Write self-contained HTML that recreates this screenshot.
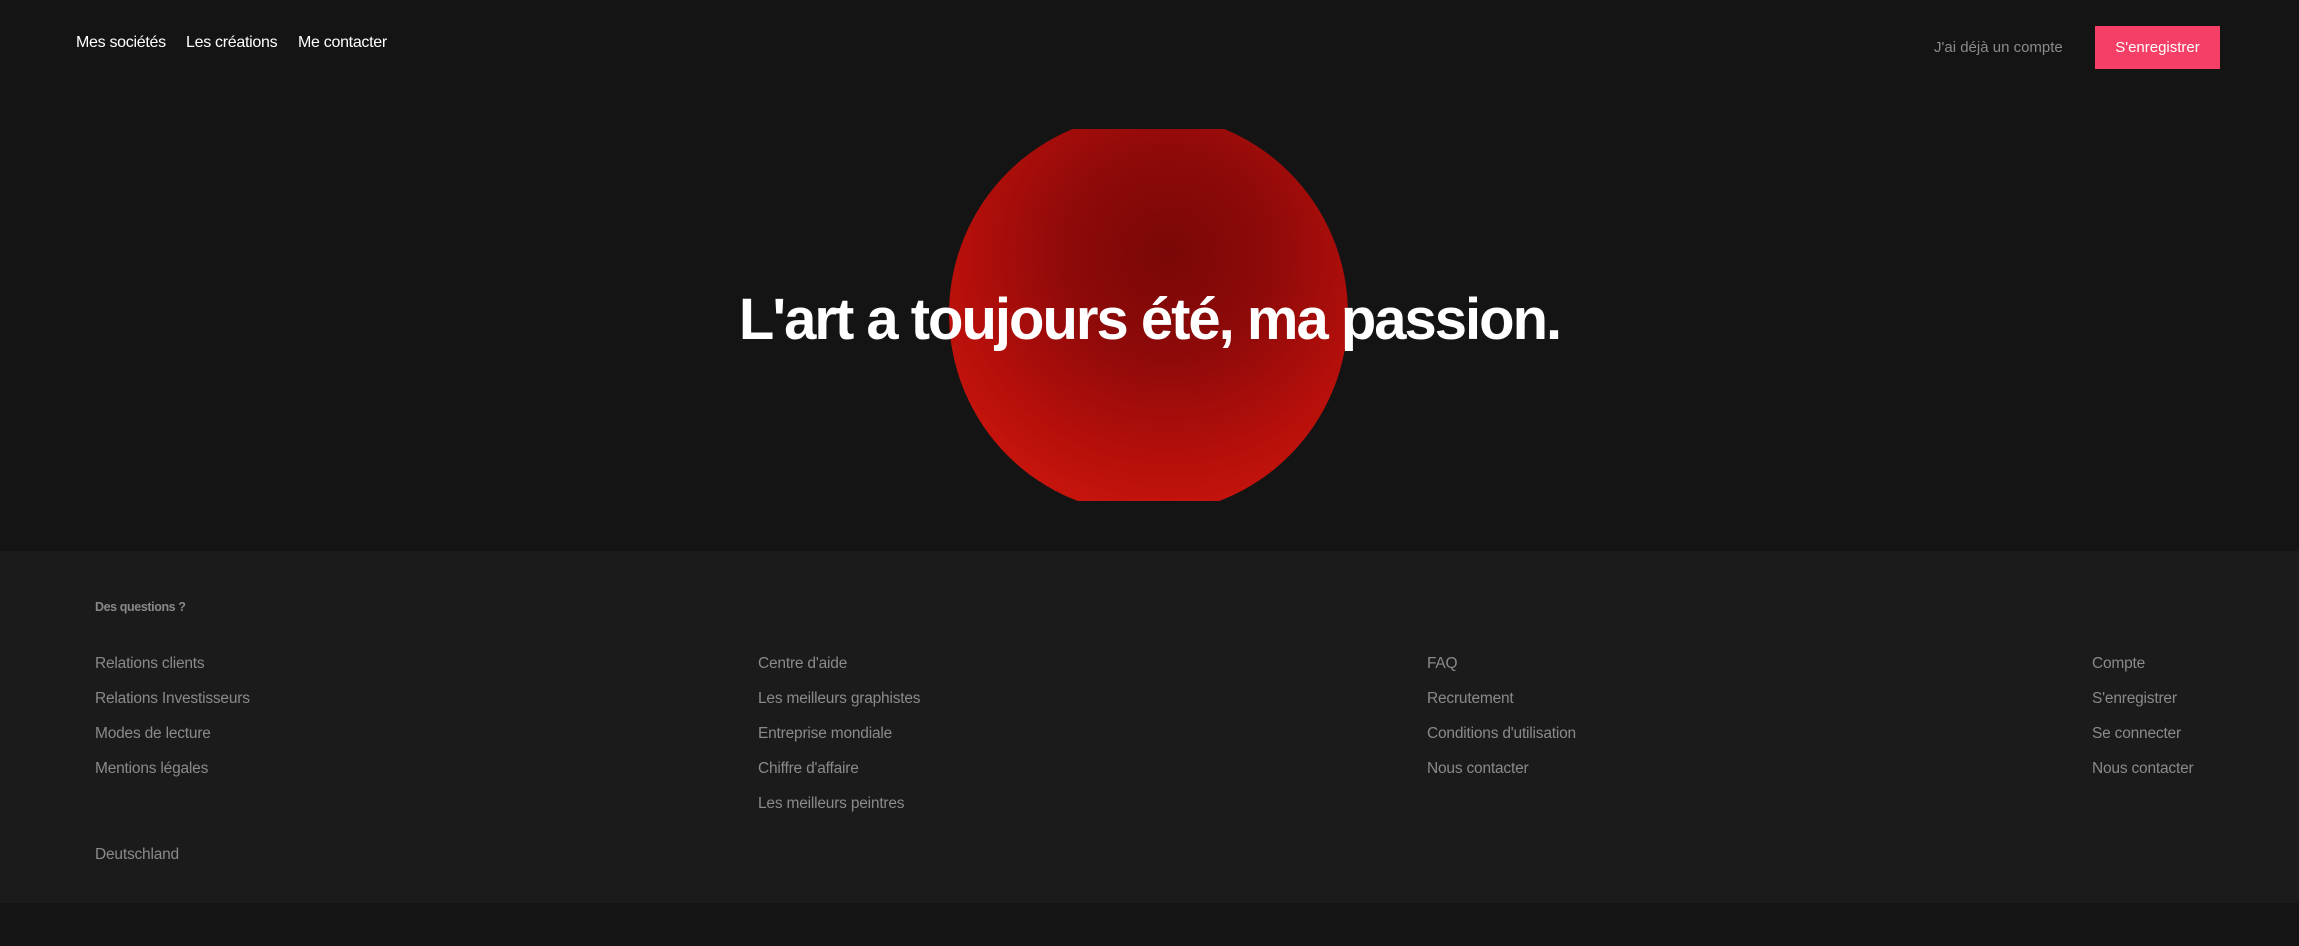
<!DOCTYPE html>
<html><head><meta charset="utf-8"><style>
*{margin:0;padding:0;box-sizing:border-box}
body{width:2299px;height:946px;background:#141414;font-family:"Liberation Sans",sans-serif;position:relative;overflow:hidden}
.a{position:absolute;white-space:nowrap}
.nav{color:#fff;font-size:16px;top:34px;letter-spacing:-0.3px}
.f{color:#8a8a8a;font-size:15.5px;letter-spacing:-0.2px}
</style></head><body>
<div class="a nav" style="left:76px">Mes sociétés</div>
<div class="a nav" style="left:186px">Les créations</div>
<div class="a nav" style="left:298px">Me contacter</div>
<div class="a" style="left:1934px;top:39px;color:#8a8a8a;font-size:15px">J'ai déjà un compte</div>
<div class="a" style="left:2095px;top:26px;width:125px;height:43px;background:#f53f66;color:#fff;font-size:15px;line-height:43px;text-align:center">S'enregistrer</div>
<div class="a" style="left:949px;top:129px;width:399px;height:372px;overflow:hidden">
<div style="position:absolute;left:0;top:-15px;width:399px;height:400px;border-radius:50%;background:radial-gradient(circle at 55% 35%,#7a0707 0%,#8e0a09 30%,#b50f0b 60%,#d3180d 90%,#d8190e 100%)"></div>
</div>
<div class="a" style="left:0;width:2299px;top:286px;text-align:center;color:#fff;font-weight:bold;font-size:58px;letter-spacing:-2px">L'art a toujours été, ma passion.</div>
<div class="a" style="left:0;top:551px;width:2299px;height:352px;background:#1b1b1b"></div>
<div class="a" style="left:95px;top:600px;color:#888;font-size:12.5px;font-weight:bold;letter-spacing:-0.4px">Des questions ?</div>
<div class="a f" style="left:95px;top:655px">Relations clients</div>
<div class="a f" style="left:95px;top:690px">Relations Investisseurs</div>
<div class="a f" style="left:95px;top:725px">Modes de lecture</div>
<div class="a f" style="left:95px;top:760px">Mentions légales</div>
<div class="a f" style="left:95px;top:846px">Deutschland</div>
<div class="a f" style="left:758px;top:655px">Centre d'aide</div>
<div class="a f" style="left:758px;top:690px">Les meilleurs graphistes</div>
<div class="a f" style="left:758px;top:725px">Entreprise mondiale</div>
<div class="a f" style="left:758px;top:760px">Chiffre d'affaire</div>
<div class="a f" style="left:758px;top:795px">Les meilleurs peintres</div>
<div class="a f" style="left:1427px;top:655px">FAQ</div>
<div class="a f" style="left:1427px;top:690px">Recrutement</div>
<div class="a f" style="left:1427px;top:725px">Conditions d'utilisation</div>
<div class="a f" style="left:1427px;top:760px">Nous contacter</div>
<div class="a f" style="left:2092px;top:655px">Compte</div>
<div class="a f" style="left:2092px;top:690px">S'enregistrer</div>
<div class="a f" style="left:2092px;top:725px">Se connecter</div>
<div class="a f" style="left:2092px;top:760px">Nous contacter</div>
</body></html>
